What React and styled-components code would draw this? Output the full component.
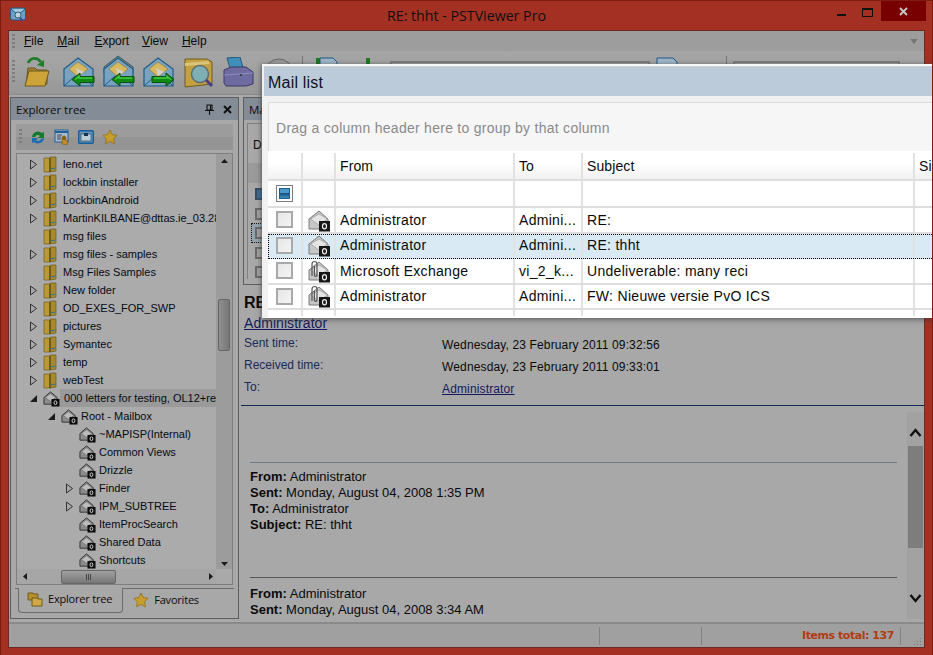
import React from 'react';
import styled, { createGlobalStyle } from 'styled-components';

const Global = createGlobalStyle`
  html, body { margin: 0; padding: 0; background: #a33022; }
  * { box-sizing: border-box; }
`;

const Windowed = styled.div`
  position: relative; width: 933px; height: 655px; overflow: hidden;
  background: #a33022; border: 1px solid #7c1d12; border-bottom-width: 0;
  display: flex; flex-direction: column;
  font-family: "Liberation Sans", Arial, sans-serif; color: #0a0a0a;
`;
const TitleBar = styled.div`
  height: 29px; flex: none; display: flex; align-items: flex-start; position: relative;
  padding-left: 9px; padding-top: 5px;
`;
const TitleText = styled.div`
  position: absolute; left: 0; right: 0; top: 5px; text-align: center;
  font: 14.2px "Open Sans", sans-serif; line-height: 20px; color: #111;
`;
const WindowButtons = styled.div`
  margin-left: auto; display: flex; align-items: flex-start; margin-top: -5px; margin-right: 6px;
`;
const WinBtn = styled.div`
  width: ${p => p.$w}px; height: 20px; display: flex; align-items: center; justify-content: center;
  padding-top: ${p => p.$dy || 0}px;
  background: ${p => p.$close ? '#780000' : 'transparent'};
`;
const Client = styled.div`
  flex: 1; margin: 0 7px 7px 7px; background: #a8a8a8; border: 1px solid #6f2a20;
  display: flex; flex-direction: column; min-height: 0;
`;
const MenuBar = styled.div`
  height: 20px; flex: none; display: flex; align-items: center; background: #9d9d9d; position: relative;
  padding-left: 3px; font-size: 12px;
`;
const Grip = styled.div`
  width: 3px; height: ${p => p.$h}px; flex: none;
  background-image: linear-gradient(#7d7d7d 50%, transparent 50%); background-size: 3px 4px;
`;
const MenuItem = styled.span`
  margin-left: ${p => p.$ml}px;
  u { text-decoration-thickness: 1px; text-underline-offset: 1px; }
`;
const MenuChevron = styled.div`
  margin-left: auto; margin-right: 6px; width: 0; height: 0;
  border-left: 4px solid transparent; border-right: 4px solid transparent; border-top: 5px solid #777;
`;
const Toolbar = styled.div`
  height: 44px; flex: none; display: flex; align-items: center; padding: 0 0 2px 3px;
  background: linear-gradient(#a6a6a6, #a0a0a0 50%, #979797); border-bottom: 1px solid #8b8b8b;
`;
const ToolSlot = styled.div`
  width: ${p => p.$w || 40}px; flex: none; display: flex; justify-content: center;
`;
const ToolSep = styled.div`
  width: 1px; height: 32px; background: #777; flex: none;
  margin: 0 ${p => p.$mr ?? 3}px 0 ${p => p.$ml ?? 3}px;
`;
const Combo = styled.div`
  width: ${p => p.$w}px; height: 22px; flex: none; border: 2px solid #7d7d7d; background: #a0a0a0;
`;
const Main = styled.div`
  flex: 1; min-height: 0; display: flex; padding: 2px 0 3px 1px; gap: 3px;
`;
const LeftPanel = styled.div`
  width: 229px; flex: none; border: 1px solid #5e5e5e; display: flex; flex-direction: column; background: #a8a8a8;
`;
const PanelHead = styled.div`
  height: 22px; flex: none; background: #848d97; display: flex; align-items: center; padding: 0 5px;
  font: 11.5px "Open Sans", sans-serif; color: #0c0c0c;
`;
const HeadButtons = styled.div`
  margin-left: auto; display: flex; gap: 9px; align-items: center; padding-right: 1px;
`;
const TreeBar = styled.div`
  height: 26px; margin: 4px 5px 3px; flex: none; display: flex; align-items: center; gap: 8px; padding-left: 3px;
  background: linear-gradient(#9c9c9c 50%, #949494 50%);
`;
const TreeFrame = styled.div`
  margin: 0 5px; height: 432px; flex: none; border: 1px solid #7f7f7f; display: grid;
  grid-template-columns: 1fr 16px; grid-template-rows: 1fr 15px; background: #a9a9a9;
`;
const TreeList = styled.div`
  overflow: hidden; background: #ababab; padding-top: 1px; font-size: 11px;
`;
const TreeRow = styled.div`
  height: 18px; display: flex; align-items: center; padding-left: ${p => p.$indent}px; white-space: nowrap;
  color: #050a14;
`;
const Expander = styled.div`
  width: 11px; flex: none; display: flex; justify-content: center; margin-right: 4px;
`;
const TreeLabel = styled.span`
  margin-left: ${p => p.$ml ?? 2}px; padding: 2px 1px; flex: 1; min-width: 0; overflow: hidden;
  background: ${p => p.$sel ? '#9a9a9a' : 'transparent'}; line-height: 14px;
`;
const VScroll = styled.div`
  background: #9c9c9c; display: flex; flex-direction: column; align-items: center; padding-top: 3px; position: relative;
`;
const ScrollFill = styled.div` flex: 1; `;
const Thumb = styled.div`
  position: absolute; left: 2px; right: 2px; top: 145px; height: 52px; border: 1px solid #666; border-radius: 2px;
  background: linear-gradient(90deg, #8f8f8f, #777);
`;
const HScroll = styled.div`
  background: #a6a6a6; display: flex; align-items: center; padding-left: 4px; position: relative;
`;
const HThumb = styled.div`
  position: absolute; left: 44px; width: 55px; top: 1px; height: 14px; border: 1px solid #666; border-radius: 2px;
  background: linear-gradient(#a0a0a0, #777); display: flex; align-items: center; justify-content: center; gap: 1px;
  span { width: 1px; height: 6px; background: #444; }
`;
const Corner = styled.div` background: #a9a9a9; `;
const Tabs = styled.div`
  height: 25px; margin: 3px 4px 0; flex: none; display: flex; border-top: 1px solid #6d6d6d;
  font: 11px "Open Sans", sans-serif; letter-spacing: -.2px;
`;
const Tab = styled.div`
  display: flex; align-items: center; gap: 5px; padding: 0 10px 3px ${p => p.$pad}px; height: 24px;
  ${p => p.$active ? `
    background: #a8a8a8; border: 1px solid #6d6d6d; border-top: 0; border-radius: 0 0 4px 4px; margin-top: -1px; height: 25px; margin-left: 3px;
  ` : ''}
`;
const RightPanel = styled.div`
  flex: 1; min-width: 0; display: flex; flex-direction: column;
`;
const MailPanel = styled.div`
  height: 188px; flex: none; margin-left: 1px; border: 1px solid #5e5e5e; border-right: 0; overflow: hidden; background: #a8a8a8;
`;
const MailInner = styled.div`
  margin: 3px 0 0 3px; height: 156px; border-left: 1px solid #808080; border-top: 1px solid #808080; padding-left: 5px; padding-top: 14px;
  font-size: 12px;
`;
const GhostHeader = styled.div`
  height: 20px; margin: 11px 0 0 -5px; background: #9b9b9b;
`;
const GhostBox = styled.div`
  width: 12px; height: 12px; margin: ${p => p.$first ? 5 : 7.5}px 0 0 2px; border: 2px solid ${p => p.$dark ? '#3a4d60' : '#6a6a6a'};
  background: ${p => p.$dark ? '#3f6c92' : '#a3a3a3'};
  ${p => p.$focus ? 'outline: 1px dotted #111; outline-offset: 3px; box-shadow: 0 0 0 3px #93a4af;' : ''}
`;
const Preview = styled.div`
  flex: 1; min-height: 0; display: flex; flex-direction: column; margin-left: -1px;
`;
const Subject = styled.div`
  font-weight: bold; font-size: 16px; line-height: 20px; margin: 8px 0 0 3px; flex: none; height: 22px;
`;
const FromLink = styled.div`
  font-size: 14px; line-height: 16px; color: #14185e; text-decoration: underline; margin-left: 3px; flex: none; letter-spacing: .05px;
`;
const Meta = styled.div`
  display: grid; grid-template-columns: 198px 1fr; grid-auto-rows: 22px; margin: 2px 0 0 3px; align-items: center;
  font-size: 12px; flex: none;
`;
const MetaLabel = styled.span` color: #1c2a58; padding-bottom: 3px; `;
const MetaValue = styled.span`
  color: ${p => p.$link ? '#14185e' : '#0a0a0a'}; text-decoration: ${p => p.$link ? 'underline' : 'none'};
  letter-spacing: .14px; padding-top: 2px;
`;
const Rule = styled.div`
  height: 1px; flex: none; background: ${p => p.$c || '#132c55'}; margin: ${p => p.$m || '6px 0 0 0'};
`;
const MessageArea = styled.div`
  flex: 1; min-height: 0; display: flex; margin-top: 6px; overflow: hidden;
`;
const MessageBody = styled.div`
  flex: 1; min-width: 0; padding: 0 10px 0 9px; overflow: hidden; font-size: 13px; line-height: 16px;
`;
const Headers = styled.div`
  margin-bottom: 44px; b { font-weight: bold; }
`;
const MScroll = styled.div`
  width: 17px; flex: none; background: #a2a2a2; position: relative; display: flex; flex-direction: column; align-items: center;
  justify-content: space-between; padding: 15px 0 15px;
`;
const MThumb = styled.div`
  position: absolute; left: 1px; right: 1px; top: 34px; height: 102px; background: #7d7d7d;
`;
const StatusBar = styled.div`
  height: 25px; flex: none; background: #a0a0a0; border-top: 2px solid #8a8a8a; display: flex; align-items: center; position: relative;
`;
const StatusCell = styled.div`
  height: 18px; flex: none; width: ${p => p.$w}px; border-right: 1px solid #838383; display: flex; align-items: center; justify-content: flex-end; padding-right: 6px;
`;
const StatusText = styled.span`
  font: bold 11px "DejaVu Sans", sans-serif; letter-spacing: -.45px; color: #b23c10; white-space: nowrap;
`;
const GripCorner = styled.div`
  margin-left: auto; align-self: flex-end; margin-right: 2px; line-height: 0;
`;
const Dialog = styled.div`
  position: absolute; left: 261px; top: 63px; width: 680px; height: 254px; background: #f1f1f1;
  border-top: 2px solid #f7f7f7; border-left: 2px solid #f0f0f0;
  box-shadow: 0 2px 6px rgba(60,60,60,.55), -1px 0 3px rgba(60,60,60,.3);
  display: flex; flex-direction: column; overflow: hidden;
`;
const DialogTitle = styled.div`
  height: 30px; flex: none; background: #bccbd9; border-top: 1px solid #cfcfcf; padding-left: 4px;
  font-size: 16px; line-height: 31px; color: #14101e; letter-spacing: .2px;
`;
const GroupPanel = styled.div`
  margin: 6px 0 0 4px; height: 49px; flex: none; background: #f6f6f6; border: 0 solid #dcdcdc; border-width: 1px 0 0 1px;
  padding: 15px 0 0 7px; font-size: 14px; line-height: 20px; color: #8a8a8a; letter-spacing: .27px;
`;
const Grid = styled.div`
  margin-left: 4px; flex: 1; min-height: 0; background: #fff; display: flex; flex-direction: column;
`;
const GridRow = styled.div`
  display: grid; grid-template-columns: 35px 33px 179px 68px 332px 1fr; flex: none;
  height: ${p => p.$h}px; font-size: 14px; letter-spacing: ${p => p.$sp || 0}px;
  padding-top: ${p => p.$head ? 2 : 0}px;
  background: ${p => p.$head ? 'linear-gradient(#fff 45%, #f1f1f1)' : p.$sel ? '#daeaf4' : '#fff'};
  border-bottom: ${p => p.$bw ?? 2}px solid #dedede;
  ${p => p.$sel ? `outline: 1px dotted #000; outline-offset: -1px; border-bottom-color: transparent;` : ''}
`;
const Cell = styled.div`
  border-right: 2px solid #e2e2e2; display: flex; align-items: center; justify-content: ${p => p.$center ? 'center' : 'flex-start'};
  padding-left: ${p => p.$center ? 0 : 4}px; white-space: nowrap; overflow: hidden;
`;
const CheckBox = styled.div`
  width: 17px; height: 17px; border: 2px solid #a9a9a9; background: linear-gradient(135deg, #e6e6e6, #f4f4f4);
`;
const CheckDark = styled.div`
  width: 17px; height: 17px; border: 1px solid #7d7d7d; padding: 2px; background: #fff;
  div { width: 100%; height: 100%; background: linear-gradient(#4a97c9 45%, #17537f 50%, #3f8dc1); border: 1px solid #1f5f8c; }
`;

const Folder = () => (
  <svg width="14" height="17" viewBox="2 1 14 17">
    <path d="M3 3h5l1 1v13H3z" fill="#bb9a36" stroke="#6d5a1d" strokeWidth=".7"/>
    <path d="M9 2h6v14l-6 1z" fill="#a88a2c" stroke="#6d5a1d" strokeWidth=".7"/>
    <path d="M9 3v14" stroke="#4d4015"/><path d="M9.500 14l5-1" stroke="#2e6f8e"/>
  </svg>
);
const Store = ({ s = 17 }) => (
  <svg width={s} height={s} viewBox="0 0 18 18">
    <path d="M1 8l7-6 7 6v7H1z" fill="#8c8c8c" stroke="#333" strokeWidth="1"/>
    <path d="M2.500 8l5.500-4 5.500 4-5.500 4z" fill="#bcbcbc" stroke="#666" strokeWidth=".6"/>
    <rect x="9" y="9.500" width="8.500" height="8" fill="#0c0c0c"/>
    <ellipse cx="13.200" cy="13.500" rx="1.500" ry="2" fill="none" stroke="#ddd" strokeWidth="1"/>
  </svg>
);
const StoreLight = ({ clip }) => (
  <svg width="24" height="24" viewBox="0 0 24 24">
    <path d="M2 11l10-8 9 8v10H2z" fill="#c6c6c6" stroke="#7a7a7a" strokeWidth="1"/>
    <path d="M3.500 11l8.500-5 8.500 5-8.500 6z" fill="#e4e4e4" stroke="#999" strokeWidth=".7"/>
    {clip && <path d="M5 17V5a2.500 2.500 0 0 1 5 0v11a1.300 1.300 0 0 1-2.600 0V7" fill="none" stroke="#555" strokeWidth="1.200"/>}
    <rect x="12" y="13" width="11" height="10.500" fill="#171717"/>
    <ellipse cx="17.500" cy="18.300" rx="2" ry="2.600" fill="none" stroke="#eee" strokeWidth="1.200"/>
  </svg>
);
const TriOpen = () => (<svg width="9" height="9" viewBox="0 0 9 9"><path d="M8 1v7H1z" fill="#1c1c1c"/></svg>);
const TriClosed = () => (<svg width="9" height="11" viewBox="0 0 9 11"><path d="M1.500 1l6 4.500-6 4.500z" fill="#a8a8a8" stroke="#333"/></svg>);
const Env = ({ dir, stack }) => (
  <svg width="32" height="34" viewBox="0 0 32 34">
    {stack && <path d="M1 12L15 1l15 11v6H1z" fill="#a58a4e" stroke="#1f5a86"/>}
    <path d="M1 14L15 3l15 11v17H1z" fill="#7aa3bf" stroke="#1f5a86" strokeWidth="1.200"/>
    <path d="M6 14l9-7 10 7-10 8z" fill="#d8b85f" stroke="#8a7738" strokeWidth=".6"/>
    <path d="M13 13l8 4-6 4z" fill="#cfcfcf"/>
    <path d="M1 31l11-10M30 31L19 21" stroke="#1f5a86"/>
    <g transform={dir === 'r' ? 'translate(40 0) scale(-1 1)' : undefined}>
      <path d="M9 24.500l8-6.500v3.500h14v6H17V31z" fill="#0f8a12" stroke="#0a4f0c" strokeWidth="1"/>
      <path d="M12 24.500l4-3v1.500h13" stroke="#45c945" strokeWidth="1.400" fill="none"/>
    </g>
  </svg>
);
const OpenFolder = () => (
  <svg width="26" height="34" viewBox="0 0 26 34">
    <path d="M4 13h7l2 2h10v14H2z" fill="#a2812b" stroke="#6b571f"/>
    <path d="M5 16h20l-4 15H1z" fill="#cda33a" stroke="#6f5a20"/>
    <path d="M4 8c3-6 9-6 13-1" fill="none" stroke="#1e7d2a" strokeWidth="2.600"/>
    <path d="M20 12l-7-2 7-5z" fill="#1e7d2a"/>
  </svg>
);
const FolderSearch = () => (
  <svg width="32" height="34" viewBox="0 0 32 34">
    <path d="M2 4h22l5 3v22L2 32z" fill="#c3a040" stroke="#6f5a20"/>
    <path d="M2 8l24-2v3L2 11z" fill="#dcc47d"/>
    <circle cx="17" cy="19" r="8.500" fill="#7dafb5" stroke="#5d6d72" strokeWidth="1.500"/>
    <path d="M23 25l6 6" stroke="#4a3f86" strokeWidth="3"/>
  </svg>
);
const Printer = () => (
  <svg width="32" height="30" viewBox="0 0 32 30">
    <path d="M4 1l13-1 3 11H7z" fill="#3f8fb9" stroke="#23597c"/>
    <path d="M1 13l7-3h15l7 5v12l-7 2H3l-2-3z" fill="#6d6ba0" stroke="#3c3b66"/>
    <path d="M1 18l29-2" stroke="#8f8dbd"/><circle cx="18" cy="18" r="1" fill="#333"/>
  </svg>
);
const Circle = () => (<svg width="30" height="32" viewBox="0 0 30 32"><circle cx="15" cy="17" r="14" fill="#9a9a9a" stroke="#666"/></svg>);
const DocGreen = () => (<svg width="32" height="32" viewBox="0 0 32 32"><rect x="6" y="2" width="4" height="10" fill="#1d7a1d"/><path d="M10 2h13l4 4v20H10z" fill="#9fb5c5" stroke="#1a5a8c"/></svg>);
const GreenOnly = () => (<svg width="32" height="32" viewBox="0 0 32 32"><rect x="14" y="2" width="4" height="10" fill="#1d7a1d"/></svg>);
const DocBlue = () => (<svg width="22" height="32" viewBox="0 0 22 32"><path d="M1 2h16l4 4v20H1z" fill="#9fb5c5" stroke="#1a5a8c"/></svg>);
const Refresh = () => (<svg width="16" height="16" viewBox="0 0 16 16"><path d="M2 8a6 6 0 0 1 10-4l2-1v6H8l2-2a3 3 0 0 0-5 1z" fill="#157a2c"/><path d="M14 9a6 6 0 0 1-10 4l-2 1V9h6l-2 2a3 3 0 0 0 5-1z" fill="#1d6bb0"/></svg>);
const HandList = () => (<svg width="16" height="16" viewBox="0 0 16 16"><rect x="1" y="1" width="13" height="12" fill="#a9bccb" stroke="#1f5f99"/><path d="M1 3h13" stroke="#1f5f99" strokeWidth="2"/><path d="M3 6h5M3 8h4M3 10h4" stroke="#445"/><path d="M8 15V8h1v3-4h1v4-4h1v4-3h1v4l2-1-1 5z" fill="#c68a2a" stroke="#6d4a12" strokeWidth=".5"/></svg>);
const WinIcon = () => (<svg width="16" height="14" viewBox="0 0 16 14"><rect x=".7" y=".7" width="14.600" height="12.600" rx="1" fill="#6b93b2" stroke="#155d9c" strokeWidth="1.400"/><rect x="3" y="4" width="10" height="7" fill="#b8cbd8" stroke="#245" strokeWidth=".6"/><rect x="6" y="3" width="4" height="3" fill="#135"/></svg>);
const Star = ({ s = 16 }) => (<svg width={s} height={s} viewBox="0 0 16 16"><path d="M8 1l2.200 4.600 5 .7-3.600 3.500.9 5L8 12.400 3.500 14.800l.9-5L.8 6.300l5-.7z" fill="#c79d2b" stroke="#8a6a14" strokeWidth=".7"/></svg>);
const TabFolders = () => (<svg width="16" height="16" viewBox="0 0 16 16"><path d="M1 2h5l1 1h4v6H1z" fill="#b58f2c" stroke="#6d5a1d"/><path d="M5 7h5l1 1h4v7H5z" fill="#cfa94a" stroke="#6d5a1d"/></svg>);
const AppIcon = () => (<svg width="16" height="19" viewBox="0 0 16 19"><rect x=".5" y="2" width="15" height="12" rx="2" fill="#6ba0c4" stroke="#1f5d87"/><path d="M1 3l7 6 7-6" fill="#a8c6d9" stroke="#1f5d87"/><circle cx="8" cy="9" r="3" fill="#bcd3df" stroke="#33607d"/><path d="M10 12l3 3" stroke="#4a3f9c" strokeWidth="2"/></svg>);
const Pin = () => (<svg width="9" height="11" viewBox="0 0 9 11"><path d="M2 1h5v5H2zM0 6.500h9M4.500 7v4M5.500 1.500v4" fill="none" stroke="#111" strokeWidth="1.100"/></svg>);
const Close = ({ s = 9, c = '#111', w = 2 }) => (<svg width={s} height={s} viewBox="0 0 9 9"><path d="M1 1l7 7M8 1L1 8" stroke={c} strokeWidth={w}/></svg>);
const Tri = ({ d }) => {
  const p = { u: 'M1 6l3.500-4L8 6z', dn: 'M1 2l3.500 4L8 2z', l: 'M6 1L2 4.500 6 8z', r: 'M2 1l4 3.500L2 8z' }[d];
  return <svg width="9" height="9" viewBox="0 0 9 9"><path d={p} fill="#1a1a1a"/></svg>;
};
const Chev = ({ up }) => (<svg width="13" height="11" viewBox="0 0 13 11"><path d={up ? 'M1.500 9l5-6 5 6' : 'M1.500 2l5 6 5-6'} fill="none" stroke="#111" strokeWidth="2.400"/></svg>);
const Sizegrip = () => (<svg width="9" height="9" viewBox="0 0 9 9" fill="#777"><rect x="7" y="0" width="1" height="1"/><rect x="7" y="3" width="1" height="1"/><rect x="4" y="3" width="1" height="1"/><rect x="7" y="6" width="1" height="1"/><rect x="4" y="6" width="1" height="1"/><rect x="1" y="6" width="1" height="1"/></svg>);

const folders = [
  ['leno.net', 1], ['lockbin installer', 1], ['LockbinAndroid', 1], ['MartinKILBANE@dttas.ie_03.28.2011', 1],
  ['msg files', 0], ['msg files - samples', 1], ['Msg Files Samples', 0], ['New folder', 1], ['OD_EXES_FOR_SWP', 1],
  ['pictures', 1], ['Symantec', 1], ['temp', 1], ['webTest', 1],
];
const stores = [
  ['~MAPISP(Internal)', 0], ['Common Views', 0], ['Drizzle', 0], ['Finder', 1], ['IPM_SUBTREE', 1],
  ['ItemProcSearch', 0], ['Shared Data', 0], ['Shortcuts', 0],
];
const mails = [
  ['Administrator', 'Admini...', 'RE:', false, false],
  ['Administrator', 'Admini...', 'RE: thht', false, true],
  ['Microsoft Exchange', 'vi_2_k...', 'Undeliverable: many reci', true, false],
  ['Administrator', 'Admini...', 'FW: Nieuwe versie PvO ICS', true, false],
];

export default function App() {
  return (
    <Windowed>
      <Global />
      <TitleBar>
        <AppIcon />
        <TitleText>RE: thht - PSTViewer Pro</TitleText>
        <WindowButtons>
          <WinBtn $w={26} $dy={6}><svg width="9" height="3"><rect width="9" height="2" y="1" fill="#111"/></svg></WinBtn>
          <WinBtn $w={27} $dy={2}><svg width="11" height="9"><rect x=".5" y=".5" width="10" height="8" fill="none" stroke="#111"/><rect width="11" height="2" fill="#111"/></svg></WinBtn>
          <WinBtn $w={45} $close><Close s={9} c="#c9c9c9" w={1.800}/></WinBtn>
        </WindowButtons>
      </TitleBar>
      <Client>
        <MenuBar>
          <Grip $h={14}/>
          <MenuItem $ml={9}><u>F</u>ile</MenuItem>
          <MenuItem $ml={14}><u>M</u>ail</MenuItem>
          <MenuItem $ml={15}><u>E</u>xport</MenuItem>
          <MenuItem $ml={13}><u>V</u>iew</MenuItem>
          <MenuItem $ml={14}><u>H</u>elp</MenuItem>
          <MenuChevron />
        </MenuBar>
        <Toolbar>
          <Grip $h={24}/>
          <ToolSlot $w={44}><OpenFolder/></ToolSlot>
          <ToolSlot $w={40}><Env/></ToolSlot>
          <ToolSlot $w={40}><Env stack/></ToolSlot>
          <ToolSlot $w={40}><Env dir="r"/></ToolSlot>
          <ToolSlot $w={40}><FolderSearch/></ToolSlot>
          <ToolSlot $w={40}><Printer/></ToolSlot>
          <ToolSlot $w={40}><Circle/></ToolSlot>
          <ToolSep/>
          <ToolSlot $w={40}><DocGreen/></ToolSlot>
          <ToolSlot $w={44}><GreenOnly/></ToolSlot>
          <Combo $w={260}/>
          <ToolSlot $w={34}><DocBlue/></ToolSlot>
          <ToolSep $ml={42} $mr={6}/>
          <Combo $w={167}/>
        </Toolbar>
        <Main>
          <LeftPanel>
            <PanelHead>Explorer tree
              <HeadButtons><Pin/><Close/></HeadButtons>
            </PanelHead>
            <TreeBar>
              <Grip $h={16}/>
              <Refresh/><HandList/><WinIcon/><Star/>
            </TreeBar>
            <TreeFrame>
              <TreeList>
                {folders.map(([t, e]) => (
                  <TreeRow key={t} $indent={11}>
                    <Expander>{e ? <TriClosed/> : null}</Expander>
                    <Folder/>
                    <TreeLabel $ml={5}>{t}</TreeLabel>
                  </TreeRow>
                ))}
                <TreeRow $indent={11}>
                  <Expander><TriOpen/></Expander>
                  <Store/>
                  <TreeLabel $sel $ml={0}>&nbsp;000 letters for testing, OL12+recovered</TreeLabel>
                </TreeRow>
                <TreeRow $indent={29}>
                  <Expander><TriOpen/></Expander>
                  <Store/>
                  <TreeLabel>Root - Mailbox</TreeLabel>
                </TreeRow>
                {stores.map(([t, e]) => (
                  <TreeRow key={t} $indent={47}>
                    <Expander>{e ? <TriClosed/> : null}</Expander>
                    <Store/>
                    <TreeLabel>{t}</TreeLabel>
                  </TreeRow>
                ))}
              </TreeList>
              <VScroll>
                <Tri d="u"/>
                <Thumb/>
                <ScrollFill/>
                <Tri d="dn"/>
              </VScroll>
              <HScroll>
                <Tri d="l"/>
                <HThumb><span/><span/><span/></HThumb>
                <ScrollFill/>
                <Tri d="r"/>
              </HScroll>
              <Corner/>
            </TreeFrame>
            <Tabs>
              <Tab $active $pad={8}><TabFolders/>Explorer tree</Tab>
              <Tab $pad={10}><Star s={16}/>Favorites</Tab>
            </Tabs>
          </LeftPanel>
          <RightPanel>
            <MailPanel>
              <PanelHead>Mail list</PanelHead>
              <MailInner>
                Drag
                <GhostHeader/>
                <GhostBox $dark $first/>
                <GhostBox/>
                <GhostBox $focus/>
                <GhostBox/>
                <GhostBox/>
              </MailInner>
            </MailPanel>
            <Preview>
              <Subject>RE: thht</Subject>
              <FromLink>Administrator</FromLink>
              <Meta>
                <MetaLabel>Sent time:</MetaLabel><MetaValue>Wednesday, 23 February 2011 09:32:56</MetaValue>
                <MetaLabel>Received time:</MetaLabel><MetaValue>Wednesday, 23 February 2011 09:33:01</MetaValue>
                <MetaLabel>To:</MetaLabel><MetaValue $link>Administrator</MetaValue>
              </Meta>
              <Rule/>
              <MessageArea>
                <MessageBody>
                  <Rule $c="#6d7a8a" $m="50px 0 6px"/>
                  <Headers>
                    <div><b>From:</b> Administrator</div>
                    <div><b>Sent:</b> Monday, August 04, 2008 1:35 PM</div>
                    <div><b>To:</b> Administrator</div>
                    <div><b>Subject:</b> RE: thht</div>
                  </Headers>
                  <Rule $c="#555" $m="0 0 8px"/>
                  <Headers>
                    <div><b>From:</b> Administrator</div>
                    <div><b>Sent:</b> Monday, August 04, 2008 3:34 AM</div>
                  </Headers>
                </MessageBody>
                <MScroll>
                  <Chev up/>
                  <MThumb/>
                  <Chev/>
                </MScroll>
              </MessageArea>
            </Preview>
          </RightPanel>
        </Main>
        <StatusBar>
          <StatusCell $w={591}/>
          <StatusCell $w={102}/>
          <StatusCell $w={199}><StatusText>Items total: 137</StatusText></StatusCell>
          <GripCorner><Sizegrip/></GripCorner>
        </StatusBar>
      </Client>
      <Dialog>
        <DialogTitle>Mail list</DialogTitle>
        <GroupPanel>Drag a column header here to group by that column</GroupPanel>
        <Grid>
          <GridRow $h={30} $head $sp={.1}>
            <Cell/><Cell/><Cell>From</Cell><Cell>To</Cell><Cell>Subject</Cell><Cell>Size</Cell>
          </GridRow>
          <GridRow $h={27}>
            <Cell $center><CheckDark><div/></CheckDark></Cell><Cell/><Cell/><Cell/><Cell/><Cell/>
          </GridRow>
          {mails.map(([f, t, s, clip, sel]) => (
            <GridRow key={s} $h={25.500} $sel={sel} $sp={.3}>
              <Cell $center><CheckBox/></Cell>
              <Cell $center><StoreLight clip={clip}/></Cell>
              <Cell>{f}</Cell><Cell>{t}</Cell><Cell>{s}</Cell><Cell/>
            </GridRow>
          ))}
          <GridRow $h={6} $bw={0}><Cell/><Cell/><Cell/><Cell/><Cell/><Cell/></GridRow>
        </Grid>
      </Dialog>
    </Windowed>
  );
}
